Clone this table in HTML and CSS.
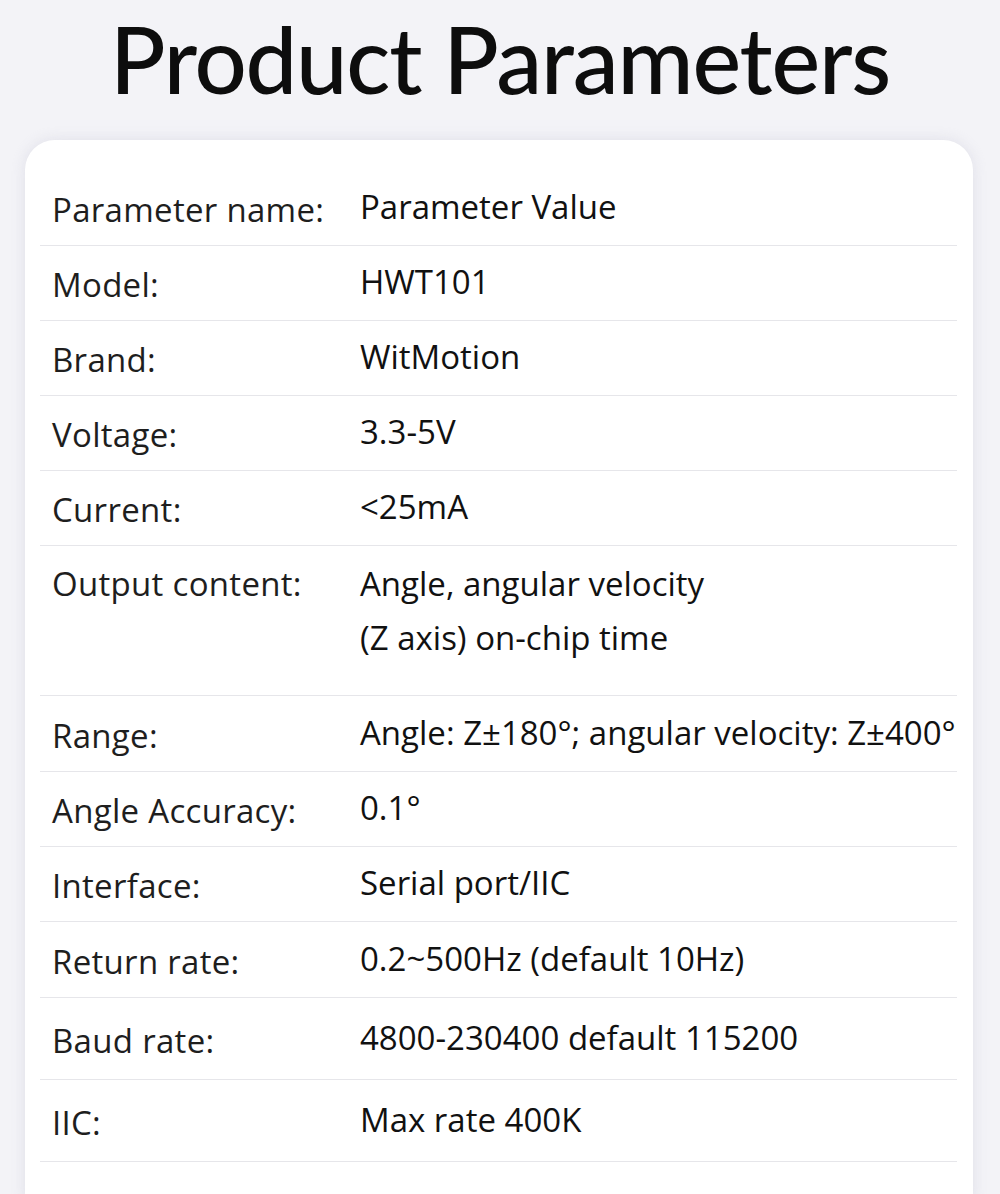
FILE: index.html
```html
<!DOCTYPE html>
<html lang="en">
<head>
<meta charset="utf-8">
<title>Product Parameters</title>
<link rel="stylesheet" href="styles.css">
</head>
<body>
<main class="page">
  <h1 class="title">Product Parameters</h1>
  <section class="card">
    <div class="row row--head"><span class="label">Parameter name:</span><span class="value">Parameter Value</span></div>
    <div class="row"><span class="label">Model:</span><span class="value">HWT101</span></div>
    <div class="row"><span class="label">Brand:</span><span class="value">WitMotion</span></div>
    <div class="row"><span class="label">Voltage:</span><span class="value">3.3-5V</span></div>
    <div class="row"><span class="label">Current:</span><span class="value">&lt;25mA</span></div>
    <div class="row row--tall"><span class="label">Output content:</span><span class="value">Angle, angular velocity<br>(Z axis) on-chip time</span></div>
    <div class="row row--r1"><span class="label">Range:</span><span class="value">Angle: Z±180°; angular velocity: Z±400°</span></div>
    <div class="row"><span class="label">Angle Accuracy:</span><span class="value">0.1°</span></div>
    <div class="row"><span class="label">Interface:</span><span class="value">Serial port/IIC</span></div>
    <div class="row row--r1"><span class="label">Return rate:</span><span class="value">0.2~500Hz (default 10Hz)</span></div>
    <div class="row row--wide"><span class="label">Baud rate:</span><span class="value">4800-230400 default 115200</span></div>
    <div class="row row--wide"><span class="label">IIC:</span><span class="value">Max rate 400K</span></div>
  </section>
</main>
</body>
</html>
```
FILE: styles.css
```css
* { box-sizing: border-box; }
html, body {
  margin: 0;
  padding: 0;
  background: #f3f3f7;
  font-family: "Open Sans", Lato, sans-serif;
  color: #1c1c1c;
}
.page {
  width: 1000px;
  height: 1194px;
  overflow: hidden;
  display: flex;
  flex-direction: column;
  align-items: center;
}
.title {
  flex-shrink: 0;
  margin: 9px 0 0;
  height: 131px;
  font-family: Lato, "Open Sans", sans-serif;
  font-size: 92px;
  font-weight: 500;
  line-height: 100px;
  letter-spacing: -1.2px;
  color: #0d0d0d;
  white-space: nowrap;
}
.card {
  flex-shrink: 0;
  align-self: flex-start;
  margin-left: 25px;
  width: 948px;
  background: #ffffff;
  border-radius: 30px 30px 0 0;
  box-shadow: 0 0 14px rgba(200, 200, 215, 0.45);
  padding: 31px 16px 40px 15px;
  display: flex;
  flex-direction: column;
}
.row {
  flex-shrink: 0;
  display: grid;
  grid-template-columns: 320px 1fr;
  align-items: center;
  height: 75px;
  border-bottom: 1px solid #e6e6ea;
  white-space: nowrap;
  font-size: 33px;
  line-height: 40px;
}
.row--r1 { height: 76px; }
.row--wide { height: 82px; }
.row--tall {
  height: 150px;
  align-items: start;
  padding-top: 18px;
}
.row--tall .value { line-height: 54px; margin-top: -7px; }
.label {
  padding-left: 12px;
  color: #1e1e1e;
  padding-top: 4px;
  letter-spacing: 0.3px;
}
.value {
  color: #111111;
  padding-bottom: 2px;
}
.row--tall .label { padding-top: 0; }
```
